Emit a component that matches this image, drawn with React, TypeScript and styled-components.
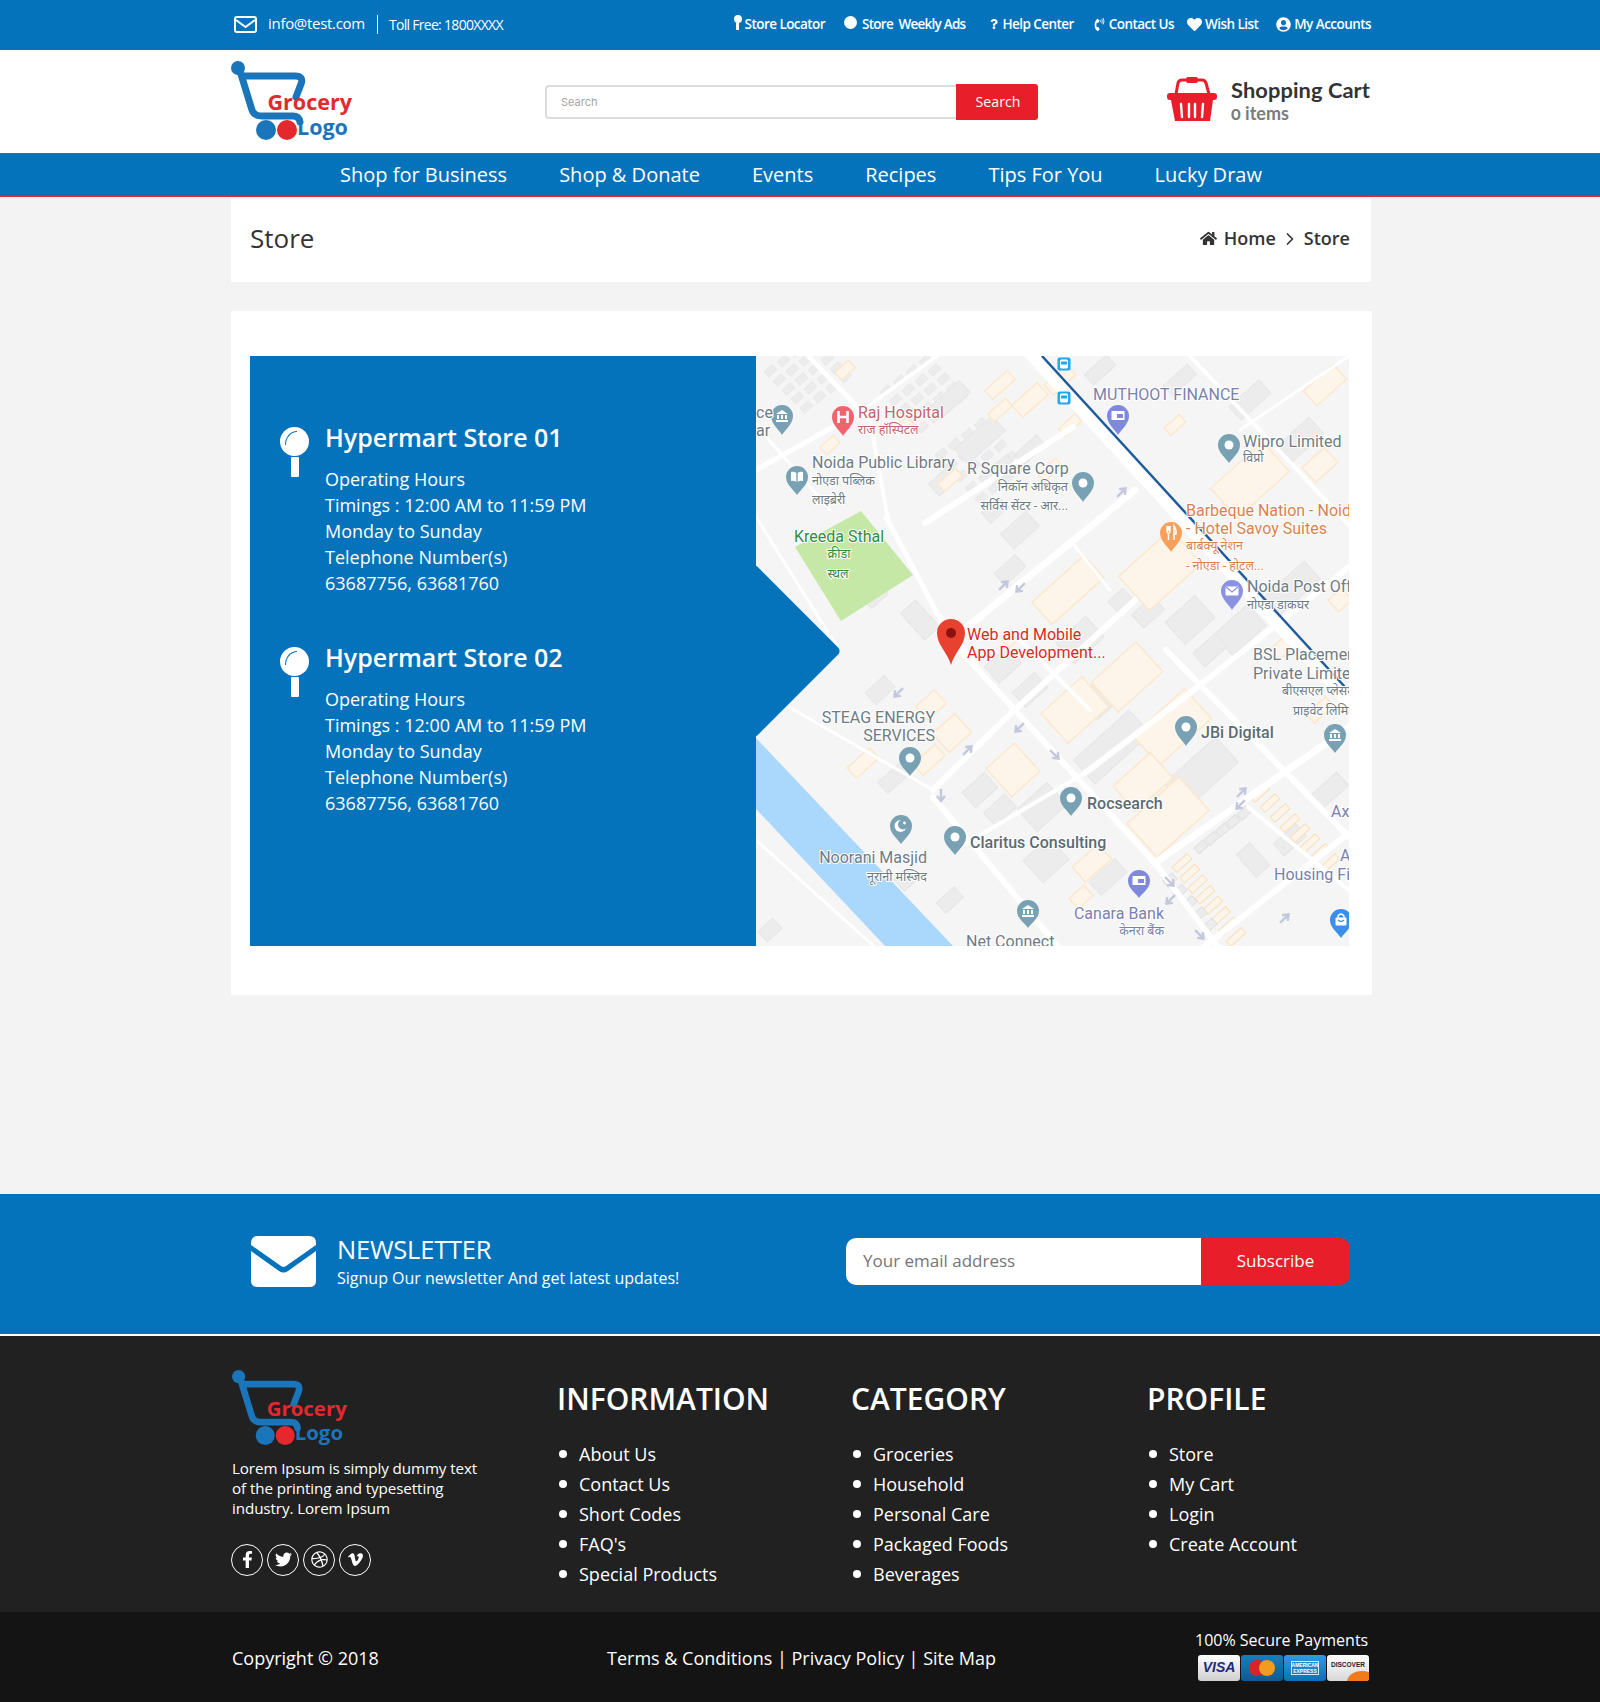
import styled, { createGlobalStyle } from "styled-components";
import { FaFacebookF, FaTwitter, FaDribbble, FaVimeoV, FaHeart, FaUserCircle, FaQuestion, FaHome, FaPhoneVolume } from "react-icons/fa";
import { FiChevronRight } from "react-icons/fi";

const BLUE = "#0473bb";
const RED = "#e81e2b";

const GlobalStyle = createGlobalStyle`
  html, body { margin: 0; padding: 0; }
  body { background: #f3f3f3; font-family: "Open Sans", "Liberation Sans", sans-serif; color: #333; }
  * { box-sizing: border-box; }
  a { color: inherit; text-decoration: none; }
  ul { list-style: none; margin: 0; padding: 0; }
`;

const Page = styled.div`
  width: 1600px;
  height: 1702px;
  overflow: hidden;
`;

const Container = styled.div`
  width: 1140px;
  margin-left: 231px;
`;

const TopBar = styled.div`
  height: 50px;
  background: ${BLUE};
  color: #fff;
`;

const TopRow = styled(Container)`
  height: 49px;
  display: flex;
  align-items: center;
  justify-content: space-between;
`;

const TopLeft = styled.div`
  display: flex;
  align-items: center;
  padding-left: 3px;
`;

const Email = styled.span`
  font-size: 15px;
  margin-left: 11px;
  letter-spacing: -0.3px;
  line-height: 20px;
  margin-top: -3px;
`;

const Toll = styled.span`
  font-size: 14px;
  font-weight: 500;
  letter-spacing: -0.7px;
  margin-left: 12px;
  padding-left: 11px;
  border-left: 1px solid #fff;
  line-height: 19px;
`;

const TopRight = styled.div`
  display: flex;
  align-items: center;
`;

const TopLink = styled.a<{ $ml: number; $ls?: number }>`
  display: flex;
  align-items: center;
  gap: 3px;
  margin-left: ${(p) => p.$ml}px;
  margin-top: -1px;
  font-size: 13.5px;
  font-weight: 600;
  letter-spacing: ${(p) => p.$ls ?? -0.55}px;
  white-space: pre;
  svg { flex: none; }
`;

const KeyPin = styled.span`
  width: 8px;
  height: 15px;
  position: relative;
  display: block;
  margin-top: -3px;
  &::before { content: ""; position: absolute; left: 0; top: 0; width: 8px; height: 8px; border-radius: 50%; background: #fff; }
  &::after { content: ""; position: absolute; left: 2.5px; top: 8px; width: 3px; height: 7px; background: #fff; }
`;

const Dot = styled.span`
  width: 13px;
  height: 13px;
  border-radius: 50%;
  background: #fff;
  display: block;
  margin-right: 2px;
  margin-top: -3px;
`;

const Header = styled.div`
  height: 103px;
  display: flex;
  align-items: center;
  background: #fff;
  padding-left: 231px;
`;

const LogoWrap = styled.div`
  width: 314px;
  flex: none;
`;

const SearchForm = styled.form`
  width: 493px;
  height: 36px;
  display: flex;
  align-items: center;
  flex: none;
`;

const SearchInput = styled.div`
  flex: 1;
  height: 34px;
  border: 2px solid #dcdcdc;
  border-right: 0;
  border-radius: 4px 0 0 4px;
  font-family: Inter, sans-serif;
  font-size: 11px;
  color: #a5a5a5;
  padding: 0 14px;
  display: flex;
  align-items: center;
`;

const SearchButton = styled.button`
  width: 82px;
  height: 36px;
  background: ${RED};
  color: #fff;
  border: 0;
  border-radius: 0 3px 3px 0;
  font-family: "Open Sans", sans-serif;
  font-size: 14.2px;
  padding: 0 0 0 2px;
`;

const Cart = styled.div`
  margin-left: 129px;
  display: flex;
  align-items: center;
  gap: 14px;
`;

const BasketWrap = styled.div`
  margin-top: -6px;
`;

const CartText = styled.div`
  font-family: Lato, sans-serif;
  display: flex;
  flex-direction: column;
  margin-top: -3px;
`;

const CartTitle = styled.div`
  font-size: 21.8px;
  font-weight: 700;
  line-height: 25px;
  color: #333;
  letter-spacing: 0.1px;
`;

const CartCount = styled.div`
  font-size: 18px;
  font-weight: 700;
  line-height: 22px;
  color: #7b7b7b;
  font-variant-numeric: oldstyle-nums;
`;

const Nav = styled.nav`
  height: 44px;
  background: ${BLUE};
  border-top: 1px solid #e02b36;
  border-bottom: 1px solid #e02b36;
  display: flex;
  align-items: center;
  padding: 0 0 2px 340px;
  gap: 52px;
`;

const NavLink = styled.a`
  color: #fff;
  font-size: 20px;
`;

const TitleCard = styled(Container)`
  height: 84px;
  background: #fff;
  margin-top: 1px;
  padding: 0 21px 4px 19px;
  display: flex;
  align-items: center;
  justify-content: space-between;
`;

const PageTitle = styled.h1`
  margin: 0;
  font-size: 26px;
  font-weight: 500;
  color: #333;
`;

const Crumbs = styled.div`
  display: flex;
  align-items: center;
  font-size: 18px;
  font-weight: 600;
  color: #333;
  gap: 7px;
`;

const CrumbArrow = styled(FiChevronRight)`
  margin: 1px -3px 0;
`;

const StoreCard = styled(Container)`
  height: 684px;
  width: 1141px;
  background: #fff;
  margin-top: 29px;
  padding: 45px 23px 0 19px;
`;

const StorePanel = styled.div`
  display: flex;
  height: 590px;
  position: relative;
`;

const InfoPanel = styled.div`
  width: 506px;
  height: 590px;
  flex: none;
  background: ${BLUE};
  color: #fff;
  padding: 63px 0 0 30px;
  display: flex;
  flex-direction: column;
  gap: 43px;
`;

const ChevronClip = styled.div`
  position: absolute;
  left: 506px;
  top: 195px;
  width: 90px;
  height: 200px;
  overflow: hidden;
  z-index: 2;
`;

const ChevronTip = styled.div`
  position: absolute;
  left: -64px;
  top: 38px;
  width: 124px;
  height: 124px;
  background: ${BLUE};
  border-radius: 5px;
  transform: rotate(45deg);
`;

const StoreItem = styled.div`
  display: flex;
  gap: 16px;
`;

const BigPin = styled.div`
  width: 29px;
  height: 50px;
  flex: none;
  margin-top: 8px;
  position: relative;
  &::before {
    content: "";
    position: absolute;
    left: 0;
    top: 0;
    width: 29px;
    height: 29px;
    border-radius: 50%;
    background: #fff;
  }
  &::after {
    content: "";
    position: absolute;
    left: 11px;
    top: 30px;
    width: 8px;
    height: 20px;
    border-radius: 1px;
    background: #fff;
  }
`;

const Gleam = styled.span`
  position: absolute;
  z-index: 1;
  left: 5px;
  top: 4px;
  width: 12px;
  height: 14px;
  border-left: 1.5px solid ${BLUE};
  border-top: 1.5px solid ${BLUE};
  border-radius: 100% 0 0 0;
`;

const StoreName = styled.h3`
  margin: 0 0 11px;
  font-size: 25px;
  line-height: 36px;
  font-weight: 600;
`;

const StoreLine = styled.div`
  font-size: 18px;
  line-height: 26px;
`;

const MapSvg = styled.svg`
  display: block;
  width: 593px;
  height: 590px;
  flex: none;
  font-family: Roboto, "Noto Sans", sans-serif;
`;

const Newsletter = styled.section`
  height: 140px;
  margin-top: 199px;
  background: ${BLUE};
  color: #fff;
  display: flex;
  align-items: center;
  padding-left: 251px;
`;

const MailWrap = styled.div`
  margin-top: -5px;
`;

const NewsText = styled.div`
  margin: -6px 0 0 21px;
  width: 509px;
  flex: none;
`;

const NewsTitle = styled.div`
  font-size: 25.5px;
  line-height: 34px;
  letter-spacing: -0.2px;
`;

const NewsSub = styled.div`
  font-size: 16px;
  line-height: 24px;
`;

const SubscribeForm = styled.form`
  display: flex;
  width: 504px;
  height: 47px;
  margin-top: -5px;
`;

const EmailField = styled.div`
  width: 355px;
  background: #fff;
  border-radius: 10px 0 0 10px;
  color: #757575;
  font-size: 17px;
  display: flex;
  align-items: center;
  padding: 0 0 2px 17px;
`;

const SubscribeButton = styled.button`
  flex: 1;
  background: ${RED};
  color: #fff;
  border: 0;
  border-radius: 0 10px 10px 0;
  font-family: "Open Sans", sans-serif;
  font-size: 17px;
  padding: 0 0 2px;
`;

const Footer = styled.footer`
  height: 276px;
  margin-top: 2px;
  background: #212121;
  color: #fff;
  display: flex;
  padding-left: 232px;
  box-shadow: 0 -2px 0 #fff;
`;

const AboutCol = styled.div`
  width: 325px;
  flex: none;
  padding-top: 33px;
`;

const AboutText = styled.p`
  margin: 9px 0 0;
  font-size: 15.2px;
  line-height: 20px;
  width: 260px;
  letter-spacing: -0.1px;
`;

const Socials = styled.div`
  display: flex;
  gap: 4px;
  margin-top: 26px;
  margin-left: -1px;
`;

const Social = styled.a`
  width: 32px;
  height: 32px;
  border-radius: 50%;
  border: 1px solid #fff;
  display: flex;
  align-items: center;
  justify-content: center;
  font-size: 17px;
`;

const LinkCol = styled.div<{ $width: number }>`
  width: ${(p) => p.$width}px;
  flex: none;
  padding-top: 43px;
`;

const ColTitle = styled.h4`
  margin: 0 0 20px;
  font-size: 30px;
  line-height: 40px;
  font-weight: 600;
`;

const LinkItem = styled.li`
  font-size: 18px;
  line-height: 30px;
  padding-left: 22px;
  position: relative;
  &::before {
    content: "";
    position: absolute;
    left: 2px;
    top: 11px;
    width: 8px;
    height: 8px;
    border-radius: 50%;
    background: #fff;
  }
`;

const BottomBar = styled.div`
  height: 91px;
  background: #141414;
  color: #fff;
  display: flex;
  align-items: center;
  padding-left: 232px;
  font-size: 18px;
`;

const Copy = styled.div`
  width: 375px;
  flex: none;
`;

const Terms = styled.div`
  width: 588px;
  flex: none;
  white-space: pre;
`;

const Secure = styled.div`
  display: flex;
  flex-direction: column;
  font-size: 16px;
  line-height: 21px;
  margin-top: -5px;
`;

const Cards = styled.div`
  display: flex;
  gap: 1px;
  margin: 4px 0 0 3px;
`;

const PayCard = styled.div<{ $bg: string }>`
  width: 42px;
  height: 26px;
  border-radius: 3px;
  background: ${(p) => p.$bg};
  display: flex;
  align-items: center;
  justify-content: center;
  position: relative;
  overflow: hidden;
`;

const VisaMark = styled.span`
  color: #1b2a78;
  font-family: "Liberation Sans", sans-serif;
  font-style: italic;
  font-weight: 700;
  font-size: 14px;
`;

const AmexMark = styled.span`
  font-family: "Liberation Sans", sans-serif;
  color: #fff;
  font-size: 5px;
  line-height: 6px;
  font-weight: 700;
  text-align: center;
  border: 1px solid #cfe9fb;
`;

const DiscoverMark = styled.span`
  font-family: "Liberation Sans", sans-serif;
  color: #222;
  font-size: 6.5px;
  font-weight: 700;
  margin-top: -7px;
  z-index: 1;
`;

const Swoosh = styled.span`
  position: absolute;
  right: -8px;
  bottom: -12px;
  width: 30px;
  height: 22px;
  border-radius: 50%;
  background: #f07a1c;
`;

const Logo = ({ scale = 1 }: { scale?: number }) => (
  <svg width={124 * scale} height={84 * scale} viewBox="0 0 124 84" style={{ display: "block" }}>
    <path
      d="M9 11 L21 50 Q23 56 31 56 L62 56 Q68 56 69 62 M11 16 L64 16 Q73 16 70 24 L65 37"
      fill="none"
      stroke="#1b75bb"
      strokeWidth="7"
      strokeLinecap="round"
    />
    <circle cx="7" cy="8" r="7" fill="#1b75bb" />
    <circle cx="35" cy="70" r="10" fill="#1b75bb" />
    <circle cx="56" cy="70" r="10" fill="#e4282d" />
    <text x="36.5" y="50" fontFamily="'Open Sans', sans-serif" fontWeight="700" fontSize="21.5" fill="#e4282d">Grocery</text>
    <text x="66" y="75" fontFamily="'Open Sans', sans-serif" fontWeight="700" fontSize="21.5" fill="#1b75bb">Logo</text>
  </svg>
);

const MailIcon = () => (
  <svg width="23" height="17" viewBox="0 0 23 17">
    <rect x="1" y="1" width="21" height="15" rx="2" fill="none" stroke="#fff" strokeWidth="2" />
    <path d="M2 4 L11.5 11 L21 4" fill="none" stroke="#fff" strokeWidth="2" />
  </svg>
);

const Basket = () => (
  <svg width="50" height="46" viewBox="0 0 50 46" style={{ display: "block" }}>
    <path d="M9 18 L11 7 Q12 4 15 4 L35 4 Q38 4 39 7 L42 18" fill="none" stroke={RED} strokeWidth="3" />
    <rect x="19" y="1" width="12" height="6" rx="2" fill={RED} />
    <rect x="0" y="17" width="50" height="7" rx="3" fill={RED} />
    <path d="M4 24 L46 24 L43 45 L8 45 Z" fill={RED} />
    <path d="M14 28 L15 41 M22 28 L22 41 M28 28 L28 41 M36 28 L35 41" stroke="#fff" strokeWidth="2.4" strokeLinecap="round" />
  </svg>
);

const BigMail = () => (
  <svg width="65" height="51" viewBox="0 0 65 51" style={{ display: "block" }}>
    <path d="M0 7 Q0 0 7 0 L58 0 Q65 0 65 7 L65 9 L35 30 Q32.5 32 30 30 L0 9 Z" fill="#fff" />
    <path d="M0 15 L28 35 Q32.5 38 37 35 L65 15 L65 45 Q65 51 58 51 L7 51 Q0 51 0 45 Z" fill="#fff" />
  </svg>
);

type Blk = [number, number, number, number];

// map data is in page pixels, the svg viewBox starts at the map's top left corner
const grayBlocks: Blk[] = [
  [1108, 690, 55, 30], [1112, 747, 75, 32], [1201, 773, 70, 34], [1042, 807, 40, 30], [980, 790, 30, 20],
  [1046, 860, 35, 30], [1108, 877, 35, 18], [894, 778, 30, 15], [1000, 810, 28, 18], [880, 690, 26, 16],
  [1003, 665, 30, 22], [1030, 690, 30, 20], [1290, 590, 60, 24], [1240, 630, 45, 28], [1190, 620, 40, 30],
  [1080, 640, 40, 28], [1148, 612, 28, 18], [980, 440, 50, 20], [945, 480, 30, 16], [1020, 530, 34, 20],
  [1010, 570, 28, 16], [1120, 600, 20, 14], [1210, 650, 30, 18], [1300, 440, 44, 22], [1250, 400, 40, 18],
  [1180, 380, 32, 14], [1100, 370, 30, 14], [950, 400, 40, 16], [1330, 790, 34, 18], [1290, 840, 30, 16],
  [1253, 860, 18, 30], [770, 930, 20, 14], [920, 620, 20, 36], [870, 590, 22, 30], [905, 880, 16, 16],
  [950, 900, 24, 14], [775, 670, 14, 10], [1000, 470, 30, 14], [1030, 450, 30, 14], [995, 510, 24, 14],
];

const peachBlocks: Blk[] = [
  [1075, 710, 55, 40], [1127, 677, 60, 40], [1172, 727, 70, 40], [1143, 782, 50, 34], [1168, 817, 70, 45],
  [1013, 770, 38, 38], [952, 733, 30, 25], [931, 705, 25, 18], [863, 763, 30, 14], [929, 760, 30, 15],
  [1092, 863, 35, 20], [1081, 897, 20, 14], [1068, 590, 70, 30], [1160, 570, 70, 46], [1250, 480, 70, 40],
  [1320, 465, 30, 20], [1280, 650, 20, 14], [1340, 600, 18, 16], [1325, 385, 40, 20], [1175, 425, 20, 10],
  [1060, 380, 30, 14], [1000, 385, 30, 12], [1050, 470, 24, 10], [950, 480, 24, 10], [1010, 640, 12, 10],
  [830, 445, 18, 10], [845, 370, 18, 10], [1320, 710, 26, 12], [1000, 410, 24, 10],
  [1030, 400, 34, 16], [1070, 425, 22, 10], [905, 425, 14, 10],
];

// residential grid in the top left corner: rows of tiny lots
const lots: number[][] = [];
for (let r = 0; r < 5; r += 1) {
  for (let c = 0; c < 4; c += 1) {
    lots.push([764 + c * 13 + r * 9, 372 + r * 9 - c * 10]);
    lots.push([880 + c * 13 + r * 9, 392 + r * 9 - c * 10]);
    lots.push([935 + c * 13 + r * 10, 455 + r * 11 - c * 10]);
  }
}

// rows of narrow shop plots in the bottom right corner
const plotRow = (x1: number, y1: number, x2: number, y2: number, n: number) =>
  Array.from({ length: n }, (_, i) => [x1 + ((x2 - x1) * i) / (n - 1), y1 + ((y2 - y1) * i) / (n - 1)]);

const peachPlots = [...plotRow(1260, 793, 1330, 863, 8), ...plotRow(1182, 863, 1236, 937, 8)];
const grayPlots = [...plotRow(1201, 847, 1244, 813, 5), ...plotRow(1170, 880, 1210, 925, 5)];

const roads: number[][] = [
  // north west to south east
  [1026, 350, 1360, 715, 11], [960, 650, 1155, 863, 6], [1155, 863, 1220, 950, 6], [1166, 650, 1349, 837, 6],
  [756, 517, 839, 650, 3], [886, 517, 937, 613, 5], [937, 613, 975, 665, 6], [789, 707, 933, 790, 3],
  [933, 797, 1061, 950, 6], [756, 840, 878, 950, 3], [756, 790, 880, 930, 2], [1248, 807, 1349, 890, 4],
  [808, 356, 870, 420, 5], [756, 425, 830, 510, 3], [870, 420, 888, 520, 4], [1020, 640, 1090, 710, 4],
  [1190, 356, 1349, 525, 4], [1070, 540, 1110, 590, 3],
  // north east to south west
  [933, 790, 1007, 717, 6], [1007, 717, 1135, 600, 6], [960, 633, 1135, 490, 7], [925, 523, 1073, 427, 6],
  [756, 470, 863, 410, 5], [863, 410, 937, 356, 4], [1085, 773, 1190, 693, 6], [1190, 693, 1349, 567, 6],
  [955, 850, 1085, 773, 4], [1155, 863, 1349, 727, 7], [1200, 950, 1349, 833, 6], [1240, 430, 1349, 356, 3],
];

type Mark = "bank" | "H" | "book" | "money" | "fork" | "mail" | "moon" | "bag" | "dot";

const pins: [number, number, number, string, Mark][] = [
  [782, 416, 435, "#78a1b3", "bank"], [843, 417, 436, "#f1636d", "H"], [797, 477, 495, "#78a1b3", "book"],
  [1083, 483, 502, "#78a1b3", "dot"], [1118, 416, 435, "#7e88dd", "money"], [1229, 445, 463, "#78a1b3", "dot"],
  [1171, 533, 552, "#f79f5b", "fork"], [1232, 591, 610, "#8b93e0", "mail"], [910, 758, 776, "#78a1b3", "dot"],
  [1186, 727, 746, "#78a1b3", "dot"], [1335, 735, 753, "#78a1b3", "bank"], [1071, 798, 816, "#78a1b3", "dot"],
  [901, 826, 844, "#78a1b3", "moon"], [955, 837, 855, "#78a1b3", "dot"], [1139, 881, 898, "#7e88dd", "money"],
  [1028, 911, 928, "#78a1b3", "bank"], [1341, 920, 938, "#3b8fe8", "bag"],
];

const PinMark = ({ kind, color }: { kind: Mark; color: string }) => {
  switch (kind) {
    case "bank":
      return <path d="M-6 -2 L0 -6 L6 -2 Z M-5 -1 H-3 V3 H-5 Z M-1 -1 H1 V3 H-1 Z M3 -1 H5 V3 H3 Z M-6 4 H6 V6 H-6 Z" fill="#fff" />;
    case "H":
      return <path d="M-4.5 -6 V6 M4.5 -6 V6 M-4.5 0 H4.5" stroke="#fff" strokeWidth="2.6" fill="none" />;
    case "book":
      return <path d="M-6 -5 Q-3 -6 -0.7 -4 V5 Q-3 3 -6 4 Z M6 -5 Q3 -6 0.7 -4 V5 Q3 3 6 4 Z" fill="#fff" />;
    case "money":
      return (
        <g>
          <rect x="-6.5" y="-5" width="13" height="9" fill="#fff" />
          <rect x="-1" y="-2" width="6" height="4" fill={color} />
        </g>
      );
    case "fork":
      return <path d="M-4 -7 V-2 Q-4 0 -2.5 0.5 V7 M-2.5 -7 V-2 M-1 -7 V-2 Q-1 0 -2.5 0.5 M3 7 V-7 Q5.5 -4 5 1 L3 1" stroke="#fff" strokeWidth="1.5" fill="none" />;
    case "mail":
      return (
        <g>
          <rect x="-6.5" y="-4.5" width="13" height="9" rx="1" fill="#fff" />
          <path d="M-6 -4 L0 1 L6 -4" stroke={color} strokeWidth="1.3" fill="none" />
        </g>
      );
    case "moon":
      return (
        <g>
          <circle cx="-0.5" cy="0" r="6" fill="#fff" />
          <circle cx="2" cy="-1.5" r="5" fill={color} />
          <circle cx="3.5" cy="-3" r="1.4" fill="#fff" />
        </g>
      );
    case "bag":
      return (
        <g>
          <rect x="-5.5" y="-2.5" width="11" height="8" rx="1" fill="#fff" />
          <path d="M-3 -2 V-4 Q0 -8 3 -4 V-2" stroke="#fff" strokeWidth="1.4" fill="none" />
          <path d="M-3 0 Q0 3 3 0" stroke={color} strokeWidth="1.2" fill="none" />
        </g>
      );
    default:
      return <circle r="4.5" fill="#fff" />;
  }
};

type Lbl = [string, number, number, string, number?, ("start" | "middle" | "end")?, number?];

const GREY = "#6d7b84";
const PURPLE = "#7a7fae";
const ORANGE = "#d9824f";
const HINDI = 12.5;
const labels: Lbl[] = [
  ["ce", 756, 418, GREY, 16], ["ar", 756, 436, GREY, 16],
  ["Raj Hospital", 858, 418, "#c4636c", 16], ["राज हॉस्पिटल", 858, 434, "#c4636c", HINDI],
  ["MUTHOOT FINANCE", 1093, 400, PURPLE, 16], ["Wipro Limited", 1243, 447, GREY, 16], ["विप्रो", 1243, 462, GREY, HINDI],
  ["Noida Public Library", 812, 468, GREY, 16], ["नोएडा पब्लिक", 812, 485, GREY, HINDI], ["लाइब्रेरी", 812, 504, GREY, HINDI],
  ["R Square Corp", 967, 474, GREY, 16], ["निकॉन अधिकृत", 1068, 491, GREY, HINDI, "end"], ["सर्विस सेंटर - आर...", 1068, 510, GREY, HINDI, "end"],
  ["Kreeda Sthal", 794, 542, "#2e8b3d", 16], ["क्रीडा", 839, 558, "#2e8b3d", HINDI, "middle"], ["स्थल", 838, 578, "#2e8b3d", HINDI, "middle"],
  ["Barbeque Nation - Noid", 1186, 516, ORANGE, 16], ["- Hotel Savoy Suites", 1186, 534, ORANGE, 16],
  ["बार्बक्यू नेशन", 1186, 550, ORANGE, HINDI], ["- नोएडा - होटल...", 1186, 570, ORANGE, HINDI],
  ["Noida Post Off", 1247, 592, GREY, 16], ["नोएडा डाकघर", 1247, 609, GREY, HINDI],
  ["Web and Mobile", 967, 640, "#d8291f", 16], ["App Development...", 967, 658, "#d8291f", 16],
  ["BSL Placement", 1253, 660, GREY, 16], ["Private Limited", 1253, 679, GREY, 16],
  ["बीएसएल प्लेसमें", 1282, 695, GREY, HINDI], ["प्राइवेट लिमिटे", 1293, 715, GREY, HINDI],
  ["STEAG ENERGY", 935, 723, GREY, 16, "end"], ["SERVICES", 935, 741, GREY, 16, "end"],
  ["JBi Digital", 1201, 738, "#5b6b74", 16, "start", 500], ["Rocsearch", 1087, 809, "#5b6b74", 16, "start", 500],
  ["Claritus Consulting", 970, 848, "#5b6b74", 16, "start", 500],
  ["Noorani Masjid", 927, 863, GREY, 16, "end"], ["नूरानी मस्जिद", 927, 881, GREY, HINDI, "end"],
  ["Canara Bank", 1164, 919, PURPLE, 16, "end"], ["केनरा बैंक", 1164, 935, PURPLE, HINDI, "end"],
  ["Net Connect", 966, 947, GREY, 16], ["Ax", 1331, 817, PURPLE, 16], ["A", 1340, 861, PURPLE, 16],
  ["Housing Fi", 1274, 880, PURPLE, 16],
];

const arrows: [number, number, number][] = [
  [1122, 492, -45], [1004, 585, -45], [1020, 588, 135], [898, 693, 135], [968, 750, -45],
  [1019, 728, 135], [1055, 755, 45], [941, 796, 90], [1242, 792, -45], [1240, 805, 135],
  [1170, 882, 45], [1170, 900, 135], [1200, 935, 45], [1285, 918, -45],
];

const MapView = () => (
  <MapSvg viewBox="756 356 593 590">
    <rect x="756" y="356" width="593" height="590" fill="#f5f5f5" />
    {lots.map(([x, y], i) => (
      <rect key={i} x={x} y={y} width="11" height="7" fill="#ececec" stroke="#e2e2e2" strokeWidth="0.6" transform={`rotate(-42 ${x} ${y})`} />
    ))}
    {grayBlocks.map(([x, y, w, h], i) => (
      <rect key={i} x={x - w / 2} y={y - h / 2} width={w} height={h} fill="#ececec" stroke="#e6e6e6" transform={`rotate(-42 ${x} ${y})`} />
    ))}
    {peachBlocks.map(([x, y, w, h], i) => (
      <rect key={i} x={x - w / 2} y={y - h / 2} width={w} height={h} fill="#fdf5e9" stroke="#fce8cd" strokeWidth="1.5" transform={`rotate(-42 ${x} ${y})`} />
    ))}
    {peachPlots.map(([x, y], i) => (
      <rect key={i} x={x - 10} y={y - 3.5} width="20" height="7" fill="#fdf5e9" stroke="#fbdfb9" transform={`rotate(-42 ${x} ${y})`} />
    ))}
    {grayPlots.map(([x, y], i) => (
      <rect key={i} x={x - 6} y={y - 4} width="12" height="8" fill="#ececec" stroke="#e0e0e0" transform={`rotate(-42 ${x} ${y})`} />
    ))}
    {roads.map(([x1, y1, x2, y2, w], i) => (
      <line key={i} x1={x1} y1={y1} x2={x2} y2={y2} stroke="#fff" strokeWidth={w} strokeLinecap="round" />
    ))}
    <polygon points="861,511 913,575 841,621 795,547" fill="#c5e8a6" />
    <polygon points="756,738 953,946 885,946 756,809" fill="#aad8fc" />
    <line x1="1042" y1="356" x2="1345" y2="687" stroke="#1d5a9a" strokeWidth="2.4" />
    {arrows.map(([x, y, a], i) => (
      <path key={i} d="M-7 0 L4 0 M0 -4 L5 0 L0 4" transform={`translate(${x} ${y}) rotate(${a})`} fill="none" stroke="#c3c8dc" strokeWidth="2.4" />
    ))}
    {[364, 398].map((y) => (
      <g key={y}>
        <rect x="1057.5" y={y - 6.5} width="13" height="13" rx="2" fill="#22a8f0" />
        <rect x="1060" y={y - 4.5} width="8" height="9" rx="1.5" fill="#fff" />
        <rect x="1061" y={y - 2.5} width="6" height="3" fill="#22a8f0" />
      </g>
    ))}
    {pins.map(([x, y, tip, color, mark], i) => (
      <g key={i}>
        <path d={`M${x - 11} ${y} A11 11 0 1 1 ${x + 11} ${y} C${x + 11} ${y + 8} ${x + 2} ${tip - 4} ${x} ${tip} C${x - 2} ${tip - 4} ${x - 11} ${y + 8} ${x - 11} ${y} Z`} fill={color} />
        <g transform={`translate(${x} ${y})`}><PinMark kind={mark} color={color} /></g>
      </g>
    ))}
    <path d="M937 633 A14 14 0 1 1 965 633 C965 645 954 653 951 665 C948 653 937 645 937 633 Z" fill="#e8412f" />
    <circle cx="951" cy="633" r="5" fill="#8c1210" />
    {labels.map(([t, x, y, color, size = 16, anchor = "start", weight = 400]) => (
      <text
        key={t + x}
        x={x}
        y={y}
        fill={color}
        fontSize={size}
        fontWeight={weight}
        textAnchor={anchor}
        stroke="#fff"
        strokeWidth="2"
        paintOrder="stroke"
      >
        {t}
      </text>
    ))}
  </MapSvg>
);

const stores = ["Hypermart Store 01", "Hypermart Store 02"];

const footerCols = [
  { title: "INFORMATION", width: 294, links: ["About Us", "Contact Us", "Short Codes", "FAQ's", "Special Products"] },
  { title: "CATEGORY", width: 296, links: ["Groceries", "Household", "Personal Care", "Packaged Foods", "Beverages"] },
  { title: "PROFILE", width: 220, links: ["Store", "My Cart", "Login", "Create Account"] },
];

export default function App() {
  return (
    <Page>
      <GlobalStyle />
      <TopBar>
        <TopRow>
          <TopLeft>
            <MailIcon />
            <Email>info@test.com</Email>
            <Toll>Toll Free: 1800XXXX</Toll>
          </TopLeft>
          <TopRight>
            <TopLink $ml={0}><KeyPin />Store Locator</TopLink>
            <TopLink $ml={19} $ls={-0.75}><Dot />Store  Weekly Ads</TopLink>
            <TopLink $ml={24}><FaQuestion size={10} />Help Center</TopLink>
            <TopLink $ml={19}><FaPhoneVolume size={13} />Contact Us</TopLink>
            <TopLink $ml={13}><FaHeart size={15} />Wish List</TopLink>
            <TopLink $ml={18}><FaUserCircle size={15} />My Accounts</TopLink>
          </TopRight>
        </TopRow>
      </TopBar>
      <Header>
        <LogoWrap><Logo /></LogoWrap>
        <SearchForm>
          <SearchInput>Search</SearchInput>
          <SearchButton type="button">Search</SearchButton>
        </SearchForm>
        <Cart>
          <BasketWrap><Basket /></BasketWrap>
          <CartText>
            <CartTitle>Shopping Cart</CartTitle>
            <CartCount>0 items</CartCount>
          </CartText>
        </Cart>
      </Header>
      <Nav>
        {["Shop for Business", "Shop & Donate", "Events", "Recipes", "Tips For You", "Lucky Draw"].map((n) => (
          <NavLink key={n}>{n}</NavLink>
        ))}
      </Nav>
      <TitleCard>
        <PageTitle>Store</PageTitle>
        <Crumbs>
          <FaHome size={17} />
          <span>Home</span>
          <CrumbArrow size={20} />
          <span>Store</span>
        </Crumbs>
      </TitleCard>
      <StoreCard>
        <StorePanel>
          <InfoPanel>
            {stores.map((s) => (
              <StoreItem key={s}>
                <BigPin><Gleam /></BigPin>
                <div>
                  <StoreName>{s}</StoreName>
                  <StoreLine>Operating Hours</StoreLine>
                  <StoreLine>Timings : 12:00 AM to 11:59 PM</StoreLine>
                  <StoreLine>Monday to Sunday</StoreLine>
                  <StoreLine>Telephone Number(s)</StoreLine>
                  <StoreLine>63687756, 63681760</StoreLine>
                </div>
              </StoreItem>
            ))}
          </InfoPanel>
          <ChevronClip><ChevronTip /></ChevronClip>
          <MapView />
        </StorePanel>
      </StoreCard>
      <Newsletter>
        <MailWrap><BigMail /></MailWrap>
        <NewsText>
          <NewsTitle>NEWSLETTER</NewsTitle>
          <NewsSub>Signup Our newsletter And get latest updates!</NewsSub>
        </NewsText>
        <SubscribeForm>
          <EmailField>Your email address</EmailField>
          <SubscribeButton type="button">Subscribe</SubscribeButton>
        </SubscribeForm>
      </Newsletter>
      <Footer>
        <AboutCol>
          <Logo scale={0.95} />
          <AboutText>Lorem Ipsum is simply dummy text of the printing and typesetting industry. Lorem Ipsum</AboutText>
          <Socials>
            <Social><FaFacebookF /></Social>
            <Social><FaTwitter /></Social>
            <Social><FaDribbble /></Social>
            <Social><FaVimeoV /></Social>
          </Socials>
        </AboutCol>
        {footerCols.map((c) => (
          <LinkCol key={c.title} $width={c.width}>
            <ColTitle>{c.title}</ColTitle>
            <ul>
              {c.links.map((l) => <LinkItem key={l}>{l}</LinkItem>)}
            </ul>
          </LinkCol>
        ))}
      </Footer>
      <BottomBar>
        <Copy>Copyright © 2018</Copy>
        <Terms>Terms &amp; Conditions | Privacy Policy | Site Map</Terms>
        <Secure>
          100% Secure Payments
          <Cards>
            <PayCard $bg="linear-gradient(#fff, #cfcfcf)"><VisaMark>VISA</VisaMark></PayCard>
            <PayCard $bg="linear-gradient(#1b7dbb, #0d5a94)">
              <svg width="30" height="18" viewBox="0 0 30 18">
                <circle cx="10" cy="9" r="8" fill="#d8232a" />
                <circle cx="20" cy="9" r="8" fill="#f39a1f" />
              </svg>
            </PayCard>
            <PayCard $bg="linear-gradient(#2f9be0, #0f6fb5)"><AmexMark>AMERICAN<br />EXPRESS</AmexMark></PayCard>
            <PayCard $bg="linear-gradient(#fff, #d8d8d8)"><Swoosh /><DiscoverMark>DISCOVER</DiscoverMark></PayCard>
          </Cards>
        </Secure>
      </BottomBar>
    </Page>
  );
}
